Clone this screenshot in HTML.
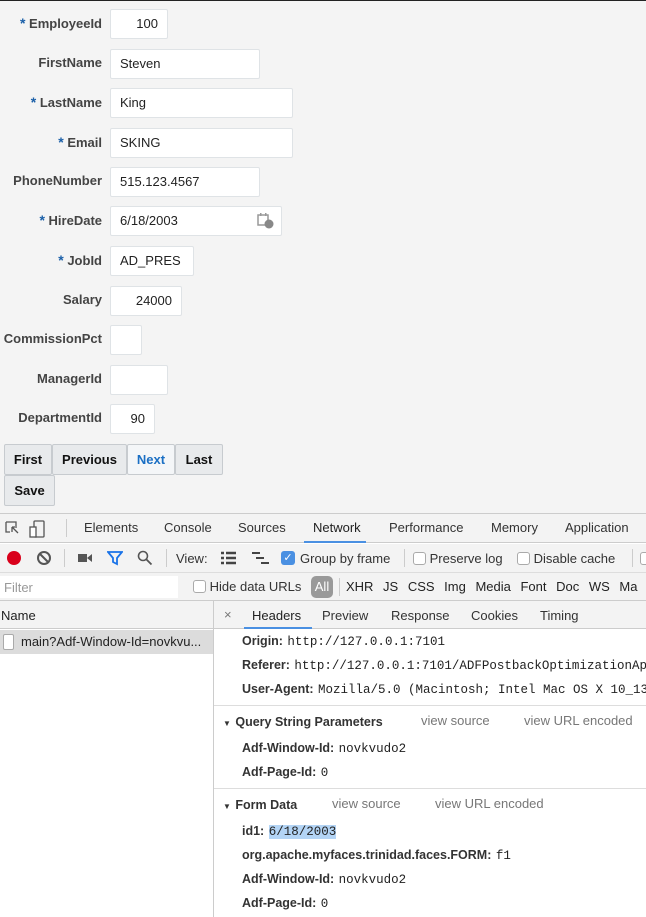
<!DOCTYPE html>
<html><head><style>
*{box-sizing:border-box;margin:0;padding:0}
body{width:646px;height:916px;overflow:hidden;background:#f4f4f4;font-family:"Liberation Sans",Arial,sans-serif;position:relative;border-top:1px solid #222}
.a{position:absolute;white-space:nowrap}
.lb{font-weight:bold;font-size:13px;color:#444;text-align:right;width:102px;left:0}
.lb b{color:#1a5fa8;font-size:14px}
.in{background:#fff;border:1px solid #dfe3e6;border-radius:2px;height:30px;font-size:13px;color:#222;padding:6px 0 0 9px}
.r{text-align:right;padding-right:9px}
.bt{background:#e8eaec;border:1px solid #c7cbcf;border-radius:2px;height:31px;font-size:13px;font-weight:bold;color:#111;text-align:center;padding-top:7px}
.dt{font-size:13px;color:#333}
.g{color:#777}
.m{font-family:"Liberation Mono",monospace;font-size:12.5px;color:#222}
.k{font-weight:bold;font-size:12.5px;color:#333}
.cb{display:inline-block;width:13px;height:13px;border:1px solid #aaa;border-radius:3px;background:#fff;vertical-align:-2px}
</style></head><body>
<div class="a lb" style="top:14px"><b>*</b> EmployeeId</div><div class="a in r" style="left:110px;top:8px;width:58px">100</div>
<div class="a lb" style="top:54px">FirstName</div><div class="a in" style="left:110px;top:48px;width:150px">Steven</div>
<div class="a lb" style="top:93px"><b>*</b> LastName</div><div class="a in" style="left:110px;top:87px;width:183px">King</div>
<div class="a lb" style="top:133px"><b>*</b> Email</div><div class="a in" style="left:110px;top:127px;width:183px">SKING</div>
<div class="a lb" style="top:172px">PhoneNumber</div><div class="a in" style="left:110px;top:166px;width:150px">515.123.4567</div>
<div class="a lb" style="top:211px"><b>*</b> HireDate</div><div class="a in" style="left:110px;top:205px;width:172px">6/18/2003
<svg style="position:absolute;left:146px;top:5px" width="18" height="18" viewBox="0 0 18 18"><rect x="1" y="3" width="10" height="10" fill="none" stroke="#999" stroke-width="1.5"/><rect x="3" y="1" width="1.5" height="3" fill="#999"/><rect x="8" y="1" width="1.5" height="3" fill="#999"/><circle cx="12" cy="12" r="4.5" fill="#888"/></svg></div>
<div class="a lb" style="top:251px"><b>*</b> JobId</div><div class="a in" style="left:110px;top:245px;width:84px">AD_PRES</div>
<div class="a lb" style="top:291px">Salary</div><div class="a in r" style="left:110px;top:285px;width:72px">24000</div>
<div class="a lb" style="top:330px">CommissionPct</div><div class="a in" style="left:110px;top:324px;width:32px"></div>
<div class="a lb" style="top:370px">ManagerId</div><div class="a in" style="left:110px;top:364px;width:58px"></div>
<div class="a lb" style="top:409px">DepartmentId</div><div class="a in r" style="left:110px;top:403px;width:45px">90</div>
<div class="a bt" style="left:4px;top:443px;width:48px">First</div>
<div class="a bt" style="left:52px;top:443px;width:75px">Previous</div>
<div class="a bt" style="left:127px;top:443px;width:48px;background:#f4f6f8;color:#1a6fc4">Next</div>
<div class="a bt" style="left:175px;top:443px;width:48px">Last</div>
<div class="a bt" style="left:4px;top:474px;width:51px">Save</div>

<div class="a" style="left:0;top:512px;width:646px;height:404px;background:#fff;border-top:1px solid #ccc"></div>
<div class="a" style="left:0;top:513px;width:646px;height:29px;background:#f3f3f3;border-bottom:1px solid #ccc"></div>
<svg class="a" style="left:5px;top:519px" width="40" height="18"><path d="M1 2h10v4M1 2v10h4M7 7l6 6M7 7h5M7 7v5" fill="none" stroke="#555" stroke-width="1.3"/><rect x="29" y="1" width="10" height="16" rx="1" fill="none" stroke="#555" stroke-width="1.3"/><rect x="25" y="7" width="6" height="10" fill="#fff" stroke="#555" stroke-width="1.3"/></svg>
<div class="a" style="left:66px;top:518px;width:1px;height:18px;background:#ccc"></div>
<div class="a dt" style="left:84px;top:519px">Elements</div>
<div class="a dt" style="left:164px;top:519px">Console</div>
<div class="a dt" style="left:238px;top:519px">Sources</div>
<div class="a dt" style="left:313px;top:519px;color:#222">Network</div>
<div class="a" style="left:304px;top:540px;width:62px;height:2px;background:#4a90e2"></div>
<div class="a dt" style="left:389px;top:519px">Performance</div>
<div class="a dt" style="left:491px;top:519px">Memory</div>
<div class="a dt" style="left:565px;top:519px">Application</div>

<div class="a" style="left:0;top:543px;width:646px;height:29px;background:#f3f3f3;border-bottom:1px solid #ddd"></div>
<div class="a" style="left:7px;top:550px;width:14px;height:14px;border-radius:50%;background:#d9001b"></div>
<svg class="a" style="left:36px;top:549px" width="16" height="16"><circle cx="8" cy="8" r="6" fill="none" stroke="#555" stroke-width="2"/><path d="M4 4l8 8" stroke="#555" stroke-width="2"/></svg>
<div class="a" style="left:64px;top:548px;width:1px;height:18px;background:#ccc"></div>
<svg class="a" style="left:77px;top:551px" width="16" height="12"><rect x="1" y="2" width="9" height="8" fill="#555"/><path d="M10 6l5-4v8z" fill="#555"/></svg>
<svg class="a" style="left:107px;top:549px" width="16" height="16"><path d="M1 2h14l-5 6v6l-4-2v-4z" fill="none" stroke="#1a73e8" stroke-width="1.8"/></svg>
<svg class="a" style="left:137px;top:549px" width="16" height="16"><circle cx="6" cy="6" r="4.5" fill="none" stroke="#555" stroke-width="1.6"/><path d="M9.5 9.5l5 5" stroke="#555" stroke-width="1.8"/></svg>
<div class="a" style="left:166px;top:548px;width:1px;height:18px;background:#ccc"></div>
<div class="a dt" style="left:176px;top:550px">View:</div>
<svg class="a" style="left:220px;top:550px" width="18" height="14"><path d="M1 2h3M6 2h10M1 7h3M6 7h10M1 12h3M6 12h10" stroke="#444" stroke-width="2.5"/></svg>
<svg class="a" style="left:251px;top:550px" width="20" height="14"><path d="M1 2h8M5 7h8M10 12h8" stroke="#444" stroke-width="2"/></svg>
<div class="a" style="left:281px;top:550px;width:14px;height:14px;border-radius:3px;background:#4a90e2;color:#fff;font-size:11px;text-align:center;line-height:14px">✓</div>
<div class="a dt" style="left:300px;top:550px">Group by frame</div>
<div class="a" style="left:404px;top:548px;width:1px;height:18px;background:#ccc"></div>
<div class="a dt" style="left:413px;top:550px"><span class="cb"></span> Preserve log</div>
<div class="a dt" style="left:517px;top:550px"><span class="cb"></span> Disable cache</div>
<div class="a" style="left:632px;top:548px;width:1px;height:18px;background:#ccc"></div>
<div class="a dt" style="left:640px;top:550px"><span class="cb"></span></div>

<div class="a" style="left:0;top:572px;width:646px;height:28px;background:#f3f3f3;border-bottom:1px solid #ccc"></div>
<div class="a" style="left:0;top:575px;width:178px;height:22px;background:#fff"></div>
<div class="a dt g" style="left:4px;top:579px;color:#999">Filter</div>
<div class="a dt" style="left:193px;top:578px"><span class="cb"></span> Hide data URLs</div>
<div class="a" style="left:311px;top:575px;width:22px;height:22px;border-radius:5px;background:#999;color:#fff;font-size:13px;text-align:center;line-height:22px">All</div>
<div class="a" style="left:339px;top:577px;width:1px;height:18px;background:#ccc"></div>
<div class="a dt" style="left:346px;top:578px;color:#222;word-spacing:6px">XHR JS CSS Img Media Font Doc WS Ma</div>

<div class="a" style="left:0;top:600px;width:646px;height:28px;background:#f3f3f3;border-bottom:1px solid #ccc"></div>
<div class="a dt" style="left:1px;top:607px;color:#222">Name</div>
<div class="a" style="left:213px;top:600px;width:1px;height:316px;background:#ccc"></div>
<div class="a g" style="left:224px;top:606px;font-size:13px">×</div>
<div class="a dt" style="left:252px;top:607px;color:#222">Headers</div>
<div class="a" style="left:244px;top:626px;width:68px;height:2px;background:#4a90e2"></div>
<div class="a dt" style="left:322px;top:607px">Preview</div>
<div class="a dt" style="left:391px;top:607px">Response</div>
<div class="a dt" style="left:471px;top:607px">Cookies</div>
<div class="a dt" style="left:540px;top:607px">Timing</div>

<div class="a" style="left:0;top:629px;width:213px;height:24px;background:#dcdcdc"></div>
<div class="a" style="left:3px;top:633px;width:11px;height:16px;background:#fff;border:1px solid #aaa;border-radius:2px"></div>
<div class="a dt" style="left:21px;top:633px;color:#222">main?Adf-Window-Id=novkvu...</div>

<div class="a" style="left:242px;top:631px"><span class="k">Origin:</span> <span class="m">http://127.0.0.1:7101</span></div>
<div class="a" style="left:242px;top:655px"><span class="k">Referer:</span> <span class="m">http://127.0.0.1:7101/ADFPostbackOptimizationApp</span></div>
<div class="a" style="left:242px;top:679px"><span class="k">User-Agent:</span> <span class="m">Mozilla/5.0 (Macintosh; Intel Mac OS X 10_13_</span></div>
<div class="a" style="left:214px;top:704px;width:432px;height:1px;background:#ddd"></div>
<div class="a" style="left:223px;top:712px"><span class="k" style="font-size:8px">▼</span> <span class="k">Query String Parameters</span></div>
<div class="a dt g" style="left:421px;top:712px">view source</div>
<div class="a dt g" style="left:524px;top:712px">view URL encoded</div>
<div class="a" style="left:242px;top:738px"><span class="k">Adf-Window-Id:</span> <span class="m">novkvudo2</span></div>
<div class="a" style="left:242px;top:762px"><span class="k">Adf-Page-Id:</span> <span class="m">0</span></div>
<div class="a" style="left:214px;top:787px;width:432px;height:1px;background:#ddd"></div>
<div class="a" style="left:223px;top:795px"><span class="k" style="font-size:8px">▼</span> <span class="k">Form Data</span></div>
<div class="a dt g" style="left:332px;top:795px">view source</div>
<div class="a dt g" style="left:435px;top:795px">view URL encoded</div>
<div class="a" style="left:242px;top:821px"><span class="k">id1:</span> <span class="m" style="background:#b3d4f5">6/18/2003</span></div>
<div class="a" style="left:242px;top:845px"><span class="k">org.apache.myfaces.trinidad.faces.FORM:</span> <span class="m">f1</span></div>
<div class="a" style="left:242px;top:869px"><span class="k">Adf-Window-Id:</span> <span class="m">novkvudo2</span></div>
<div class="a" style="left:242px;top:893px"><span class="k">Adf-Page-Id:</span> <span class="m">0</span></div>
</body></html>
